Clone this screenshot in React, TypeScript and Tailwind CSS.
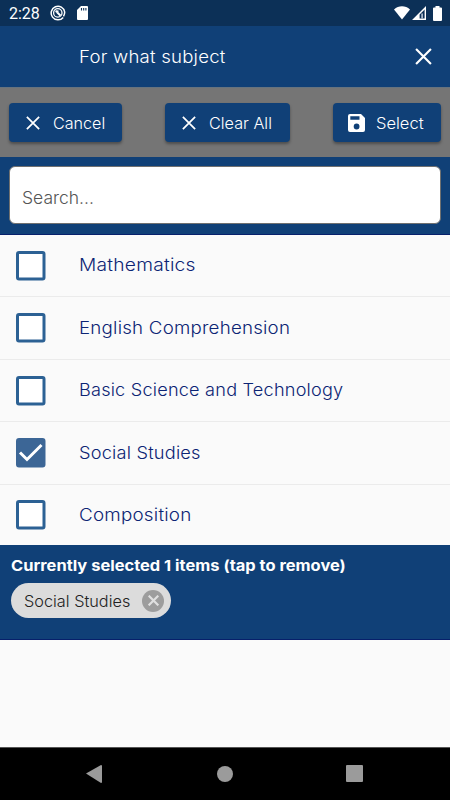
import React from "react";

type Subject = { label: string; checked?: boolean; height: string; stretch: string };

const subjects: Subject[] = [
  { label: "Mathematics", height: "h-[62px]", stretch: "scale-x-[1.13]" },
  { label: "English Comprehension", height: "h-[63px]", stretch: "scale-x-[1.10]" },
  { label: "Basic Science and Technology", height: "h-[62px]", stretch: "scale-x-[1.065]" },
  { label: "Social Studies", checked: true, height: "h-[63px]", stretch: "scale-x-[1.069]" },
  { label: "Composition", height: "h-[60px]", stretch: "scale-x-[1.107]" },
];

function Cross({ className, width = 2 }: { className: string; width?: number }) {
  return (
    <svg className={className} viewBox="0 0 16 16" fill="none" stroke="currentColor" strokeWidth={width}>
      <path d="M1 1 15 15M15 1 1 15" />
    </svg>
  );
}

function StatusBar() {
  return (
    <div className="flex h-[26px] items-center bg-[#0c3057] text-white">
      <span className="ml-[9px] w-[41px] pt-[2px] font-[Roboto] text-[16px] leading-[24px] font-normal">2:28</span>
      <svg className="h-4 w-4" viewBox="0 0 16 16" fill="none" stroke="currentColor">
        <path d="M13.2 12.4A6.8 6.8 0 1 1 14.7 7c0 1.600-.4 3-1.200 4.300" strokeWidth="1.500" />
        <circle cx="7.800" cy="7.900" r="4.200" strokeWidth="1.300" />
        <path d="m5.800 6 4.800 4.800M5.500 6.200l3 .3" strokeWidth="2" />
      </svg>
      <svg className="ml-[11px] h-[14px] w-[11px]" viewBox="0 0 11 14">
        <path d="M4 0h6q1 0 1 1v12q0 1-1 1H1q-1 0-1-1V4Z" fill="white" />
        <path d="M4.500 2v2.500M6.700 2v2.500M8.900 2v2.500" stroke="#0c3057" strokeWidth="1.100" />
      </svg>
      <div className="mr-2 ml-auto flex items-center">
        <svg className="h-[14px] w-4" viewBox="0 0 16 14" fill="white">
          <path d="M0 3.500C4.500-.8 11.500-.8 16 3.500L8 13.500Z" />
        </svg>
        <svg className="ml-[2px] h-[14px] w-[14px]" viewBox="0 0 14 14">
          <path fillRule="evenodd" d="M14 0v14H0ZM12.600 3.400 7.600 8.400v4.200h5Z" fill="white" />
          <path d="M9.300 7.500h1.600v5H9.300Z" fill="#b9c6d6" />
        </svg>
        <svg className="ml-[7px] h-[15px] w-[9px]" viewBox="0 0 9 15">
          <path d="M2.500 0h4v1.500H8q1 0 1 1V14q0 1-1 1H1q-1 0-1-1V2.500q0-1 1-1h1.500Z" fill="white" />
        </svg>
      </div>
    </div>
  );
}

const button =
  "flex h-[39px] shrink-0 items-center rounded-[4px] bg-[#104077] text-[15.500px] font-light whitespace-nowrap text-white shadow-[0_2px_3px_rgba(0,0,0,0.35)]";

export default function App() {
  return (
    <div className="flex h-[800px] w-[450px] flex-col overflow-hidden bg-[#fafafa] font-[Inter,sans-serif]">
      <StatusBar />
      <header className="flex h-[61px] items-center bg-[#104077] pr-[18px] pl-[79px] text-white">
        <h1 className="origin-left scale-x-[1.094] pt-[2px] text-[17px] font-light tracking-[0.2px]">For what subject</h1>
        <Cross className="ml-auto h-[17px] w-[17px]" />
      </header>
      <div className="flex h-[70px] items-center justify-between border-t border-[#66737f] bg-[#757575] pr-[9px] pl-[9px]">
        <button className={button + " w-[113px]"}>
          <Cross className="ml-[17px] h-[14px] w-[14px]" />
          <span className="ml-[13px] origin-left scale-x-[1.04] pt-[2px]">Cancel</span>
        </button>
        <button className={button + " w-[125px]"}>
          <Cross className="ml-[17px] h-[14px] w-[14px]" />
          <span className="ml-[13px] origin-left scale-x-[1.046] pt-[2px]">Clear All</span>
        </button>
        <button className={button + " w-[108px]"}>
          <svg className="ml-[15px] h-[18px] w-[17px]" viewBox="0 0 17 18">
            <path fillRule="evenodd" d="M2 0h11l4 4v12q0 2-2 2H2q-2 0-2-2V2Q0 0 2 0ZM2.300 2.200v3.500h9.200V2.200ZM8.600 9.600a2.900 2.900 0 1 0 0 5.800 2.900 2.900 0 0 0 0-5.800Z" fill="white" />
          </svg>
          <span className="ml-[11px] origin-left scale-x-[1.065] pt-[2px]">Select</span>
        </button>
      </div>
      <div className="h-[78px] border-b border-[#07206b] bg-[#104077] px-[9px] pt-[9px]">
        <div className="flex h-[58px] items-center rounded-[6px] border border-[#707070] bg-white px-[12px] pt-[7px]">
          <span className="origin-left scale-x-[1.03] text-[17px] font-light text-[#555]">Search...</span>
        </div>
      </div>
      <ul className="flex h-[310px] flex-col">
        {subjects.map(({ label, checked, height, stretch }) => (
          <li key={label} className={`flex items-center border-b border-[#ebebeb] pl-4 last:border-b-0 ${height}`}>
            <svg className="h-[30px] w-[30px]" viewBox="0 0 30 30" fill="none">
              <rect x="1.500" y="1.500" width="26.500" height="26.500" rx="1.500" stroke={checked ? "#3c6696" : "#2c6194"} strokeWidth="3" fill={checked ? "#3c6696" : "white"} />
              {checked && <path d="m4 14.500 7 7L25.500 7" stroke="white" strokeWidth="3" />}
            </svg>
            <span className={`ml-[33px] origin-left pt-px text-[17px] font-light tracking-[0.2px] whitespace-nowrap text-[#0c2474] ${stretch}`}>{label}</span>
          </li>
        ))}
      </ul>
      <section className="flex h-[95px] flex-col border-b border-[#07206b] bg-[#104077] pt-[10px] pl-[11px]">
        <h2 className="origin-left scale-x-[1.098] self-start text-[15px] leading-[22px] font-bold whitespace-nowrap text-white">Currently selected 1 items (tap to remove)</h2>
        <div className="mt-[6px] flex h-[35px] w-[160px] items-center rounded-full bg-[#dcdcdc] pl-[13px] text-[15.500px] font-light text-[#222]">
          <span className="origin-left scale-x-[1.05] pt-[2px] whitespace-nowrap">Social Studies</span>
          <span className="mr-[7px] ml-auto flex h-[22px] w-[22px] items-center justify-center rounded-full bg-[#9d9d9d] text-[#e0e0e0]">
            <Cross className="h-[11px] w-[11px]" width={3.2} />
          </span>
        </div>
      </section>
      <div className="flex-1" />
      <nav className="h-[53px] border-t border-[#555] bg-black">
        <svg className="h-[52px] w-[450px]" viewBox="0 748 450 52" fill="#9b9b9b">
          <path d="m86 773.500 15-8.500q1 0 1 1v16q0 1-1 1Z" />
          <circle cx="225" cy="774" r="8" />
          <rect x="346" y="765" width="17" height="17" rx="1" />
        </svg>
      </nav>
    </div>
  );
}
